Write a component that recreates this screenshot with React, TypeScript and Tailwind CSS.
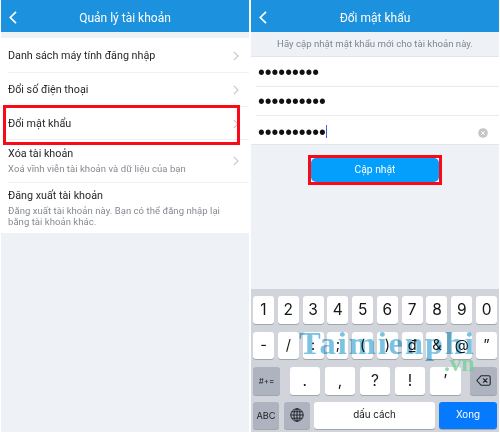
import type { ReactNode } from "react";

function Back() {
  return (
    <svg className="h-[13px] w-2" viewBox="0 0 8 13" fill="none" stroke="white" strokeWidth="1.7">
      <path d="M7 .8 1.3 6.5 7 12.2" />
    </svg>
  );
}

function Chevron() {
  return (
    <svg className="h-2.5 w-1.5 shrink-0" viewBox="0 0 6 10" fill="none" stroke="#c3c6ca" strokeWidth="1.1">
      <path d="M.8.8 5 5 .8 9.2" />
    </svg>
  );
}

function Header({ children }: { children: ReactNode }) {
  return (
    <header className="relative flex h-8 items-center justify-center bg-[#1c92de] pt-[3px] text-[12px] leading-none text-white">
      <span className="absolute top-[11px] left-2">
        <Back />
      </span>
      {children}
    </header>
  );
}

type RowProps = { title: string; note?: ReactNode; arrow?: boolean; size: string };

function Row({ title, note, arrow = true, size }: RowProps) {
  return (
    <div className={`flex items-center justify-between pr-[10px] pl-[7px] ${size}`}>
      <div>
        <div className="text-[10.75px] leading-[14px] whitespace-nowrap text-[#26282b]">{title}</div>
        {note && <div className="mt-[2px] text-[9.5px] leading-[11.5px] tracking-[0.05px] whitespace-nowrap text-[#858a90]">{note}</div>}
      </div>
      {arrow && <Chevron />}
    </div>
  );
}

function Account() {
  return (
    <section className="relative h-[432px] w-[248px] bg-[#eef2f6]">
      <Header>
        <span>Quản lý tài khoản</span>
      </Header>
      <div className="mt-1.5 bg-white">
        <Row title="Danh sách máy tính đăng nhập" size="h-[34px] pt-[2px]" />
        <div className="ml-[7px] h-px bg-[#eff1f3]" />
        <Row title="Đổi số điện thoại" size="h-[33px] pt-px" />
        <div className="ml-[7px] h-px bg-[#eff1f3]" />
        <Row title="Đổi mật khẩu" size="h-[32px] pt-[2px]" />
        <div className="ml-[7px] h-px bg-[#eff1f3]" />
        <Row title="Xóa tài khoản" note="Xoá vĩnh viễn tài khoản và dữ liệu của bạn" size="h-[42px]" />
        <div className="ml-[7px] h-px bg-[#eff1f3]" />
        <Row
          title="Đăng xuất tài khoản"
          note={
            <>
              Đăng xuất tài khoản này. Bạn có thể đăng nhập lại
              <br />
              bằng tài khoản khác.
            </>
          }
          arrow={false}
          size="h-[50px]"
        />
      </div>
      <div className="absolute top-[105px] left-[2px] h-10 w-[237px] border-3 border-[#fb0819]" />
    </section>
  );
}

function Dots({ count, caret = false, size }: { count: number; caret?: boolean; size: string }) {
  return (
    <div className={`ml-[5px] flex items-center justify-between border-t border-[#e9ecee] pr-[11px] pl-[2px] first:border-transparent ${size}`}>
      <div className="flex items-center">
        <span className="font-['Liberation_Sans',sans-serif] text-[19.4px] leading-none text-[#111]">
          {"•".repeat(count)}
        </span>
        {caret && <span className="-mt-0.5 h-[13px] w-px bg-[#4361c9]" />}
      </div>
      {caret && (
        <svg className="size-[10px]" viewBox="0 0 10 10">
          <circle cx="5" cy="5" r="4.8" fill="#c3c5c8" />
          <path d="m3.2 3.2 3.6 3.6m0-3.6L3.2 6.8" stroke="white" strokeWidth="1" />
        </svg>
      )}
    </div>
  );
}

type KeyProps = { children: ReactNode; size?: string; tone?: string };

function Key({ children, size = "min-w-0 flex-1", tone = "bg-white text-[#151719]" }: KeyProps) {
  return (
    <div className={`flex h-[27.5px] items-center justify-center rounded-[3px] leading-none shadow-[0_1px_0_#a1a5ac] ${size} ${tone}`}>
      {children}
    </div>
  );
}

const dark = "bg-[#adb4c0] text-[#202329]";

function Keyboard() {
  return (
    <div className="relative flex h-[143px] flex-col gap-[8px] bg-[#d1d5db] px-[2px] pt-[7px] font-['Inter',sans-serif] text-[15.5px]">
      <div className="flex gap-[3.8px]">
        {["1", "2", "3", "4", "5", "6", "7", "8", "9", "0"].map((k) => (
          <Key key={k}>{k}</Key>
        ))}
      </div>
      <div className="flex gap-[3.8px] text-[14.5px]">
        {["-", "/", ":", ";", "(", ")", "₫", "&", "@", "”"].map((k) => (
          <Key key={k}>{k}</Key>
        ))}
      </div>
      <div className="flex justify-between">
        <Key size="w-[27px]" tone={dark}>
          <span className="text-[8px]">#+=</span>
        </Key>
        <div className="flex w-[171px] gap-[4.4px]">
          {[".", ",", "?", "!", "’"].map((k) => (
            <Key key={k}>{k}</Key>
          ))}
        </div>
        <Key size="w-[27px]" tone={dark}>
          <svg className="h-[11px] w-[15px]" viewBox="0 0 15 11" fill="none" stroke="#202329" strokeWidth="1.1" strokeLinejoin="round">
            <path d="M5 .8h7.7c.9 0 1.5.6 1.5 1.5v6.4c0 .9-.6 1.5-1.5 1.5H5L.8 5.5ZM7 3.3l4.4 4.4m0-4.4L7 7.7" />
          </svg>
        </Key>
      </div>
      <div className="-mt-px flex">
        <Key size="w-[26px]" tone={dark}>
          <span className="text-[9.2px]">ABC</span>
        </Key>
        <Key size="ml-[5px] w-[26px]" tone={dark}>
          <svg className="size-[14px]" viewBox="0 0 14 14" fill="none" stroke="#202329" strokeWidth="1">
            <circle cx="7" cy="7" r="6.2" />
            <ellipse cx="7" cy="7" rx="3.1" ry="6.2" />
            <path d="M7 .8v12.4M.8 7h12.4M1.7 3.8h10.6M1.7 10.2h10.6" />
          </svg>
        </Key>
        <Key size="ml-1 w-[121px]">
          <span className="text-[9.8px]">dấu cách</span>
        </Key>
        <Key size="ml-1 min-w-0 flex-1" tone="bg-[#067aff] text-white">
          <span className="text-[9.8px]">Xong</span>
        </Key>
      </div>
      <div className="absolute top-[35px] left-[48px] font-['Liberation_Serif',serif] text-[32.5px] leading-[38px] font-bold tracking-[1.9px] text-[#7bc3e2] mix-blend-multiply">
        Taimienphi
      </div>
      <div className="absolute top-[61px] left-[193px] font-['Liberation_Serif',serif] text-[24px] leading-[26px] font-bold tracking-[-0.4px] text-[#6dcf93]/75">
        .vn
      </div>
    </div>
  );
}

function Password() {
  return (
    <section className="flex h-[432px] w-[248px] flex-col bg-[#eef2f6]">
      <Header>
        <span>Đổi mật khẩu</span>
      </Header>
      <div className="flex h-[25px] items-center justify-center border-b border-[#e2e6e9] text-[9.6px] whitespace-nowrap text-[#7f858b]">
        Hãy cập nhật mật khẩu mới cho tài khoản này.
      </div>
      <div className="h-[88px] border-b border-[#e2e6e9] bg-white">
        <Dots count={9} size="h-[29px] pt-px" />
        <Dots count={10} size="h-[29px] pt-[2px]" />
        <Dots count={10} caret size="h-[29px] pt-[5px]" />
      </div>
      <div className="flex flex-1 justify-center pt-[10px]">
        <div className="h-[30px] w-[134px] border-3 border-[#fb0819] bg-white">
          <div className="flex h-full items-center justify-center rounded-[5px] bg-[#049ffc] text-[10.3px] leading-none text-white">
            Cập nhật
          </div>
        </div>
      </div>
      <Keyboard />
    </section>
  );
}

export default function App() {
  return (
    <main className="flex h-[434px] w-[500px] gap-[2px] bg-white px-px font-['Roboto',sans-serif]">
      <Account />
      <Password />
    </main>
  );
}
